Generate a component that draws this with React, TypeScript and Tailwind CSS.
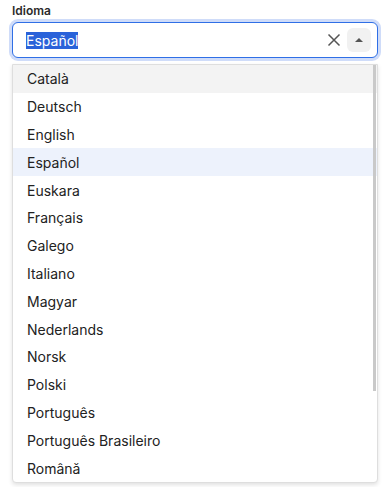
const languages = [
  "Català",
  "Deutsch",
  "English",
  "Español",
  "Euskara",
  "Français",
  "Galego",
  "Italiano",
  "Magyar",
  "Nederlands",
  "Norsk",
  "Polski",
  "Português",
  "Português Brasileiro",
  "Română",
];

const BehindField = () => (
  <div className="flex flex-col gap-1">
    <div className="h-[14px] text-[12px] font-semibold text-[#333]">&nbsp;</div>
    <div className="h-[36px] rounded-md border border-[#d4d4d4] bg-white" />
  </div>
);

const App = () => {
  return (
    <div className="relative h-[487px] w-[384px] overflow-hidden bg-white font-['Inter',sans-serif] text-[#222]">
      <div className="flex flex-col gap-[40px] pt-[3px] pr-[6px] pl-3">
        <div className="flex flex-col gap-[4px]">
          <label className="h-[15px] text-[12px] font-semibold leading-[15px] text-[#2b2b2b]">Idioma</label>
          <div className="flex h-[36px] items-center rounded-md border border-[#2f6fe6] bg-white pr-[6px] pl-[13px] ring-[3px] ring-[#cfdcf9]">
            <span className="flex-1 text-[14px]">
              <span className="bg-[#2a62d9] text-white">Español</span>
            </span>
            <svg width="14" height="14" viewBox="0 0 14 14" className="mr-[6px]">
              <path d="M1.5 1.5 L12.5 12.5 M12.5 1.5 L1.5 12.5" stroke="#555" strokeWidth="1.5" />
            </svg>
            <div className="flex h-[24px] w-[24px] items-center justify-center rounded-md bg-[#f1f1f1]">
              <svg width="10" height="6" viewBox="0 0 10 6">
                <path d="M1 5 L5 1 L9 5 Z" fill="#555" />
              </svg>
            </div>
          </div>
        </div>
        <BehindField />
        <BehindField />
        <BehindField />
        <BehindField />
        <BehindField />
        <BehindField />
      </div>

      <div className="absolute top-[64px] left-[12px] w-[366px] overflow-hidden rounded-b-[4px] border border-[#dedede] bg-white shadow-[0_2px_4px_rgba(0,0,0,0.12)]">
        {languages.map((lang) => (
          <div
            key={lang}
            className={
              "flex h-[27.8px] items-center pl-[14px] text-[14px] text-[#222] " +
              (lang === "Català" ? "bg-[#f3f3f3]" : lang === "Español" ? "bg-[#edf2fc]" : "")
            }
          >
            {lang}
          </div>
        ))}
        <div className="absolute top-0 right-[1px] h-[326px] w-[3px] bg-[#c9c9c9]" />
      </div>
    </div>
  );
};

export default App;
